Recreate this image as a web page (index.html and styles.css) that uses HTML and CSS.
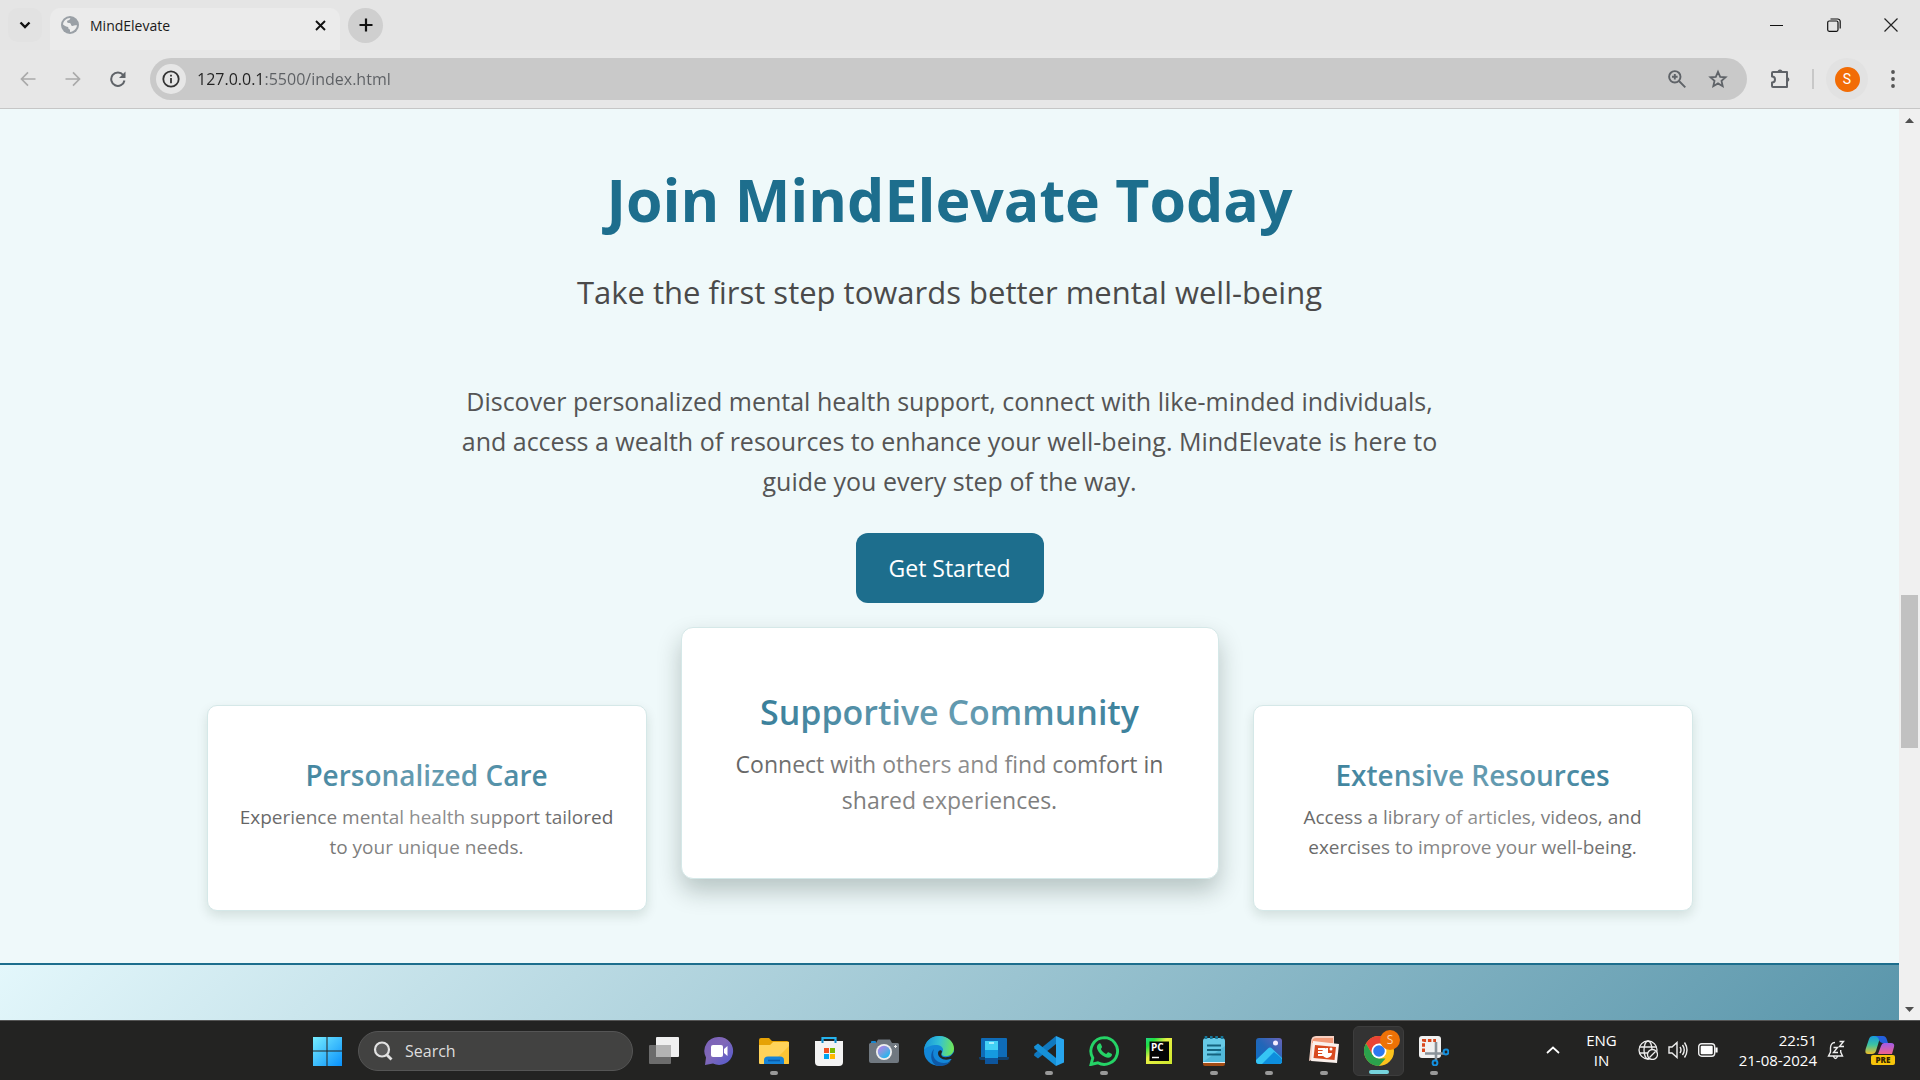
FILE: index.html
```html
<!DOCTYPE html>
<html lang="en">
<head>
<meta charset="utf-8">
<title>MindElevate</title>
<link rel="stylesheet" href="styles.css">
</head>
<body>
<header class="browser">
  <div class="tabstrip">
    <button class="tab-search" aria-label="Search tabs"><svg width="12" height="8" viewBox="0 0 12 8"><path d="M1.5 1.5 6 6l4.500-4.500" fill="none" stroke="#111" stroke-width="2.400"/></svg></button>
    <div class="tab">
      <svg width="18" height="18" viewBox="0 0 18 18"><circle cx="9" cy="9" r="9" fill="#9aa0a6"/><path d="M9.500 2C8.500 3 9 4 7.500 4.300 6 4.500 6 5.500 6.200 6.300c.4 1 2.300.4 3.300 1.200.9.800.2 2.200 1.600 2.400 1.500.2 2.300-.8 4.900-.6-.4 3.300-3.200 6.400-7 6.700v-2.500c-1.400-.2-1.800-1-1.700-2.200C6.200 10.500 4.500 10.700 2 8.500 2.200 5 5.500 1.800 9.500 2z" fill="#eee"/></svg>
      <span class="tab-title">MindElevate</span>
      <button class="icon-btn" aria-label="Close tab"><svg width="11" height="11" viewBox="0 0 11 11"><path d="M1 1l9 9M10 1l-9 9" stroke="#111" stroke-width="1.900"/></svg></button>
    </div>
    <button class="new-tab" aria-label="New tab"><svg width="14" height="14" viewBox="0 0 14 14"><path d="M7 .5v13M.5 7h13" stroke="#111" stroke-width="2.200"/></svg></button>
    <div class="window-controls">
      <button aria-label="Minimize"><svg width="14" height="14" viewBox="0 0 14 14"><path d="M0 7.500h13" stroke="#111"/></svg></button>
      <button aria-label="Restore"><svg width="14" height="14" viewBox="0 0 14 14" fill="none" stroke="#111" stroke-width="1.200"><rect x=".7" y="3" width="10.300" height="10.300" rx="1.500"/><path d="M3.500 1h7a2.500 2.500 0 0 1 2.700 2.500v7"/></svg></button>
      <button aria-label="Close"><svg width="14" height="14" viewBox="0 0 14 14"><path d="M.5.5l13 13M13.500.5l-13 13" stroke="#222" stroke-width="1.200"/></svg></button>
    </div>
  </div>
  <div class="toolbar">
    <nav class="nav">
      <button aria-label="Back"><svg width="16" height="16" viewBox="0 0 16 16"><path d="M15.500 8H2M8 1.300 1.500 8 8 14.700" fill="none" stroke="#aaa" stroke-width="1.700"/></svg></button>
      <button aria-label="Forward"><svg width="16" height="16" viewBox="0 0 16 16"><path d="M.5 8H14M8 1.300 14.500 8 8 14.700" fill="none" stroke="#aaa" stroke-width="1.700"/></svg></button>
      <button aria-label="Reload"><svg width="16" height="16" viewBox="0 0 16 16"><path d="M13.200 4A6.700 6.700 0 1 0 14.500 9.500" fill="none" stroke="#5f6368" stroke-width="2"/><path d="M15.500.5v6.500H9z" fill="#5f6368"/></svg></button>
    </nav>
    <div class="omnibox">
      <button class="site-info" aria-label="View site information"><svg width="18" height="18" viewBox="0 0 18 18"><circle cx="9" cy="9" r="7.700" fill="none" stroke="#333" stroke-width="1.800"/><path d="M9 8v5.200M9 4.800v1.800" stroke="#333" stroke-width="1.800"/></svg></button>
      <input class="url" type="text" aria-label="Address" value="127.0.0.1:5500/index.html">
      <button class="icon-btn" aria-label="Zoom"><svg width="18" height="18" viewBox="0 0 18 18" fill="none" stroke="#5f6368" stroke-width="1.900"><circle cx="6.800" cy="6.800" r="5.700"/><path d="M11 11l6.300 6.300M6.800 4v5.600M4 6.800h5.600"/></svg></button>
      <button class="icon-btn" aria-label="Bookmark this page"><svg width="20" height="20" viewBox="0 0 20 20"><path d="M10 2.800l2.200 5 5.400.5-4.100 3.600 1.200 5.300L10 14.400l-4.700 2.800 1.200-5.300-4.100-3.600 5.400-.5z" fill="none" stroke="#5f6368" stroke-width="1.800"/></svg></button>
    </div>
    <div class="tools">
      <button class="icon-btn" aria-label="Extensions"><svg width="22" height="22" viewBox="0 0 22 22"><path d="M3 4h14v15H3q-1 0-1-1v-3.500c4 0 4-6 0-6V5q0-1 1-1z" fill="none" stroke="#5f6368" stroke-width="2" stroke-linejoin="round"/><path d="M7.500 4a2.500 2.500 0 0 1 5 0zM17.500 9a2.600 2.600 0 0 1 0 5z" fill="#5f6368"/></svg></button>
      <span class="divider"></span>
      <button class="profile" aria-label="Profile"><span>S</span></button>
      <button class="icon-btn" aria-label="Menu"><svg width="4" height="18" viewBox="0 0 4 18" fill="#555"><circle cx="2" cy="2" r="1.900"/><circle cx="2" cy="9" r="1.900"/><circle cx="2" cy="16" r="1.900"/></svg></button>
    </div>
  </div>
</header>

<div class="viewport">
  <main class="page">
    <section class="join">
      <h1>Join MindElevate Today</h1>
      <p class="tagline">Take the first step towards better mental well-being</p>
      <p class="intro">Discover personalized mental health support, connect with like-minded individuals, and access a wealth of resources to enhance your well-being. MindElevate is here to guide you every step of the way.</p>
      <button class="cta">Get Started</button>
      <div class="cards">
        <article class="card"><h2>Personalized Care</h2><p>Experience mental health support tailored to your unique needs.</p></article>
        <article class="card card-active"><h2>Supportive Community</h2><p>Connect with others and find comfort in shared experiences.</p></article>
        <article class="card"><h2>Extensive Resources</h2><p>Access a library of articles, videos, and exercises to improve your well-being.</p></article>
      </div>
    </section>
    <footer class="footer"></footer>
  </main>
  <div class="scrollbar">
    <svg width="9" height="5" viewBox="0 0 9 5"><path d="M0 5 4.500 0 9 5z" fill="#505050"/></svg>
    <div class="track"><span class="thumb"></span></div>
    <svg width="9" height="5" viewBox="0 0 9 5"><path d="M0 0l4.500 5L9 0z" fill="#505050"/></svg>
  </div>
</div>

<div class="taskbar">
  <div class="apps">
    <button class="app" aria-label="Start"><svg viewBox="0 0 30 30"><defs><linearGradient id="win" x1="0" y1="0" x2="30" y2="30" gradientUnits="userSpaceOnUse"><stop stop-color="#7af0ff"/><stop offset="1" stop-color="#0890fb"/></linearGradient></defs><path d="M1 1h13.500v13.500H1zM15.500 1H30v13.500H15.500zM1 15.500h13.500V30H1zM15.500 15.500H30V30H15.500z" fill="url(#win)"/></svg></button>
    <label class="search"><svg width="20" height="20" viewBox="0 0 20 20" fill="none" stroke="#e2e2e2" stroke-width="2.200"><circle cx="9" cy="8.500" r="7" fill="#5a5a5a"/><path d="M13.500 13.500l5 5" stroke-width="2.800"/></svg><input type="search" placeholder="Search" aria-label="Search"></label>
    <button class="app" aria-label="Task view"><svg viewBox="0 0 30 30"><rect y="9" width="22" height="19" rx="1" fill="#6c6c6c"/><rect x="7" y="1" width="23" height="20" rx="1" fill="#f0f0f0"/><path d="M7 9h15v12H7z" fill="#b4b4b4"/></svg></button>
    <button class="app" aria-label="Chat"><svg viewBox="0 0 30 30"><defs><linearGradient id="chat" x1="0" y1="0" x2="1" y2="1"><stop stop-color="#7a60b8"/><stop offset=".45" stop-color="#8168b8"/><stop offset="1" stop-color="#5059cf"/></linearGradient></defs><path d="M15 1a14 14 0 1 1-6 26.600L1 29l1-7.500A14 14 0 0 1 15 1z" fill="url(#chat)"/><rect x="7" y="9" width="12" height="12" rx="2" fill="#fff"/><path d="M20 13l3.500-3v10L20 17z" fill="#fff"/></svg></button>
    <button class="app running" aria-label="File Explorer"><svg viewBox="0 0 30 30"><path d="M0 4q0-2 2-2h8l3 3h15q2 0 2 2v6H0z" fill="#e6a205"/><path d="M0 9h11l3-3h16v21q0 1-1 1H1q-1 0-1-1z" fill="#ffd35a"/><path d="M30 10v18H12z" fill="#fbbf25" opacity=".7"/><path d="M5 28v-4q0-3.500 4-3.500h12q4 0 4 3.500v4z" fill="#1583d8"/><path d="M9 24.500h12" stroke="#0a5cab" stroke-width="1.600"/></svg></button>
    <button class="app" aria-label="Microsoft Store"><svg viewBox="0 0 30 30"><path d="M8.500 7V2h13v5" fill="none" stroke="#25b3ee" stroke-width="2.200"/><path d="M1 5h28v21q0 4-4 4H5q-4 0-4-4z" fill="#f3f3f3"/><path d="M10 12h5v5h-5z" fill="#f25022"/><path d="M16 12h5v5h-5z" fill="#7fba00"/><path d="M10 18h5v5h-5z" fill="#00a4ef"/><path d="M16 18h5v5h-5z" fill="#ffb900"/><path d="M8.500 7V4M21.500 7V4" stroke="#118bc9" stroke-width="2"/></svg></button>
    <button class="app" aria-label="Camera"><svg viewBox="0 0 30 30"><defs><linearGradient id="lens" x1="0" y1="0" x2=".8" y2="1"><stop stop-color="#bd7af0"/><stop offset=".5" stop-color="#779fe0"/><stop offset="1" stop-color="#13baf2"/></linearGradient></defs><rect x="2" y="5" width="5" height="4" rx="1" fill="#1787d0"/><path d="M1.500 7H7l2-3.500h12L23 7h5.500Q30 7 30 8.500v16.500q0 2-2 2H2q-2 0-2-2V8.500Q0 7 1.500 7z" fill="#707880"/><circle cx="15" cy="16" r="8" fill="#eee"/><circle cx="15" cy="16" r="6.200" fill="url(#lens)"/><path d="M26.500 9v3M25 10.500h3" stroke="#eee"/></svg></button>
    <button class="app" aria-label="Microsoft Edge"><svg viewBox="0 0 30 30"><defs><linearGradient id="edge" x1="0" y1=".4" x2="1" y2=".5"><stop stop-color="#1794dc"/><stop offset=".5" stop-color="#34c1d5"/><stop offset="1" stop-color="#71e755"/></linearGradient></defs><circle cx="15" cy="15" r="15" fill="#1387d8"/><path d="M0 14C1 5 7 0 15 0c9 0 15 6 15 12.500 0 5-4 7.500-8 7.500-4.500 0-5-2-3.500-4 2-3-1-7-5.500-7C7 9 2 11 0 14z" fill="url(#edge)"/><path d="M10 13c-3 8 2 14 10 14 3 0 6-1 7-2-3 4-8 5.500-13 5-7-1-9-12-4-17z" fill="#0e58a6"/><path d="M18 16c-2 3 0 6 5 5 3 0 5-2 7-5v7h-4c-6 2-12-1-12-6 0-3 4-4 4-1z" fill="#232322"/></svg></button>
    <button class="app" aria-label="Phone Link"><svg viewBox="0 0 30 30"><rect x="2" y="2" width="26" height="20" rx="1" fill="#0f6cb8"/><path d="M0 21h30v1q0 2-2 2H2q-2 0-2-2z" fill="#11406c"/><rect x="6" y="5" width="13" height="23" rx="1" fill="#159ae0"/><path d="M6 5h13v9H6z" fill="#42d1f6"/><path d="M6 22h13v6H6z" fill="#0d559d"/><path d="M10 7h5" stroke="#e5ffff" stroke-width="1.200"/></svg></button>
    <button class="app running" aria-label="Visual Studio Code"><svg viewBox="0 0 30 30"><path d="M22 0l8 3.500v23L22 30z" fill="#27a5ee"/><path d="M22 0v8L4 22.500l-4-3 .5-2z" fill="#1079c0"/><path d="M22 30v-8L4 7.500l-4 3 .5 2z" fill="#1691d8"/></svg></button>
    <button class="app running" aria-label="WhatsApp"><svg viewBox="0 0 30 30"><path d="M15.200 1.600a13.400 13.400 0 1 1-6.400 25.200L2 28.500l1.800-6.600A13.400 13.400 0 0 1 15.200 1.600z" fill="none" stroke="#25d366" stroke-width="2.900"/><path d="M9.500 8c1-1 2-.8 2.500.3l1 2.500c.3 1-1.300 1.800-1 2.500 1 2.200 2.800 3.600 5 4.600.8.200 1.600-2 2.500-1.600l3 1.500c1 .6.300 2.300-.6 3-1.500 1.300-3.500 1.300-5.800.3-3.800-1.500-6.500-4.500-7.900-8C7.500 11 8 9.300 9.500 8z" fill="#25d366"/></svg></button>
    <button class="app" aria-label="PyCharm"><svg viewBox="0 0 30 30"><defs><linearGradient id="py" x1="0" y1="0" x2="1" y2="1"><stop stop-color="#20d789"/><stop offset=".18" stop-color="#20e040"/><stop offset=".42" stop-color="#e8f044"/><stop offset="1" stop-color="#cde72d"/></linearGradient></defs><path d="M2 2h26v26H2z" fill="url(#py)"/><path d="M5.500 5.500h19.500V25H5.500z" fill="#050505"/><text x="7" y="15" class="pc">PC</text><path d="M8 21.500h7" stroke="#fff" stroke-width="1.500"/></svg></button>
    <button class="app running" aria-label="Notepad"><svg viewBox="0 0 30 30"><path d="M4 25h22v3q0 2-2 2H6q-2 0-2-2z" fill="#a34c14"/><path d="M4 24h22v3H4z" fill="#eee"/><path d="M4 5q0-3 3-3h16q3 0 3 3v21H4z" fill="#66c9e6"/><path d="M4 26L26 10v16z" fill="#42aed1" opacity=".6"/><path d="M8 9.500h14M8 14h14M8 18.500h14" stroke="#15627e" stroke-width="1.800"/><path d="M7 0v3M12.300 0v3M17.600 0v3M23 0v3" stroke="#15779a" stroke-width="2.600"/></svg></button>
    <button class="app running" aria-label="Photos"><svg viewBox="0 0 30 30"><defs><linearGradient id="pho" x1="0" y1="1" x2="1" y2="0"><stop stop-color="#0b6fc7"/><stop offset=".5" stop-color="#2266b8"/><stop offset="1" stop-color="#6863b8"/></linearGradient></defs><rect x="2" y="2" width="26" height="26" rx="3" fill="url(#pho)"/><path d="M2 24l12-11.500q2-2 4 0L28 22v3q0 3-3 3H5q-3 0-3-3z" fill="#36c5f4"/><path d="M8 28l12-12q8 6 8 8v1q0 3-3 3z" fill="#0d8edd"/><circle cx="21.500" cy="7" r="2.500" fill="#f5edff"/></svg></button>
    <button class="app running" aria-label="PowerPoint"><svg viewBox="0 0 30 30"><path d="M7 0h18v15L0 25 2 6q0-6 5-6z" fill="#f6d0c2"/><path d="M7 2h17v5H3q0-5 4-5z" fill="#f49a78"/><path d="M4 5l26 3-2 19-26-2z" fill="#faf0ec"/><path d="M6 9l21 2-1.500 13L4.500 22z" fill="#d94a1f"/><path d="M9 13h7M9 16h5M9 19h7" stroke="#fff" stroke-width="1.800"/><path d="M19 12a5 5 0 1 0 4 5h-4z" fill="#fff"/><circle cx="22" cy="13" r="1.500" fill="#fff"/></svg></button>
    <button class="app running active" aria-label="Google Chrome"><svg viewBox="0 0 30 30"><circle cx="15" cy="15" r="15" fill="#fcc31d"/><path d="M2 7.500a15 15 0 0 1 26 0H15L8.500 18.750z" fill="#ea4335"/><path d="M2 7.500l6.500 11.250L15 22.500h6.500L15 30A15 15 0 0 1 2 7.500z" fill="#2ba24c"/><circle cx="15" cy="15" r="7.500" fill="#fff"/><circle cx="15" cy="15" r="5.800" fill="#2b78ef"/></svg><span class="badge">S</span></button>
    <button class="app running" aria-label="Snipping Tool"><svg viewBox="0 0 30 30"><rect width="22" height="22" rx="3" fill="#f1f1f1"/><path d="M4.500 16V4.500H17" fill="none" stroke="#d9471d" stroke-width="3" stroke-dasharray="3.500 1.800"/><path d="M17 6v18M6 17.500h19" stroke="#8a9299" stroke-width="2.600"/><g fill="none" stroke="#1490df" stroke-width="2"><circle cx="16" cy="27" r="2.400"/><circle cx="27" cy="16" r="2.400"/></g></svg></button>
  </div>
  <div class="tray">
    <button aria-label="Show hidden icons"><svg width="14" height="8" viewBox="0 0 14 8"><path d="M1 7l6-5.500L13 7" fill="none" stroke="#fff" stroke-width="1.700"/></svg></button>
    <button class="lang">ENG<br>IN</button>
    <button class="status" aria-label="Network, volume and battery">
      <svg width="20" height="20" viewBox="0 0 20 20" fill="none" stroke="#eee" stroke-width="1.300"><circle cx="10" cy="10" r="9"/><ellipse cx="10" cy="10" rx="4" ry="9"/><path d="M1.500 7h17M1.500 13h17"/><circle cx="14.500" cy="14.500" r="5" fill="#232322"/><path d="M11.500 17.500l6-6"/></svg>
      <svg width="20" height="18" viewBox="0 0 20 18" fill="none" stroke="#eee" stroke-width="1.400"><path d="M1 6h3l5-4.500v15L4 12H1zM12 6q2 3 0 6M14.500 4q3.500 5 0 10M16.500 1.500q5 7.500 0 15"/></svg>
      <svg width="20" height="14" viewBox="0 0 20 14"><rect x=".7" y=".7" width="16" height="12.500" rx="3" fill="none" stroke="#eee" stroke-width="1.400"/><rect x="2.700" y="2.700" width="12" height="8.500" rx="1" fill="#fff"/><path d="M18.500 4.500v5" stroke="#fff" stroke-width="2.200"/></svg>
    </button>
    <button class="clock">22:51<br>21-08-2024</button>
    <button aria-label="Notifications"><svg width="18" height="20" viewBox="0 0 18 20" fill="none" stroke="#eee" stroke-width="1.400"><path d="M8 2.500C5 2.500 3.500 5 3.500 8v4L1.500 16h14l-1.800-4v-2M6.500 16.500q2 4 4 0"/><path d="M6.500 7.500h4l-4 5h4.500M12.500 1.500h4l-4 5h4.500"/></svg></button>
    <button class="copilot" aria-label="Copilot"><svg width="32" height="30" viewBox="0 0 32 30"><defs><linearGradient id="co" x1="0" y1="0" x2="0" y2="1"><stop stop-color="#169bdc"/><stop offset=".5" stop-color="#3ec5a0"/><stop offset="1" stop-color="#f0bd25"/></linearGradient><linearGradient id="cp" x1="0" y1="0" x2="0" y2="1"><stop stop-color="#a05ce8"/><stop offset="1" stop-color="#f0628c"/></linearGradient></defs><path d="M9 1h10q-3 1-4 5l-3 10q-1 3-4 3H4c-3 0-3-3-2-6L5 4q1-3 4-3z" fill="url(#co)"/><path d="M10 1h9q3 0 4 4l1 3h-5q-3 0-4-3-1-4-5-4z" fill="#2460dd"/><path d="M20 8h7q4 0 3 4l-2 7H14l3-8q1-3 3-3z" fill="url(#cp)"/><rect x="7" y="20" width="24" height="10" rx="2" fill="#f7c40b"/><text x="19" y="28" text-anchor="middle" class="pre">PRE</text></svg></button>
  </div>
</div>
</body>
</html>
```
FILE: styles.css
```css
* { box-sizing: border-box; }

body {
  margin: 0;
  min-height: 100vh;
  display: flex;
  flex-direction: column;
  font-family: "Open Sans", "Noto Sans", sans-serif;
  color: #555;
}

button {
  padding: 0;
  border: 0;
  background: none;
  color: inherit;
  font: inherit;
  display: inline-flex;
  align-items: center;
  justify-content: center;
}

input {
  border: 0;
  outline: 0;
  padding: 0;
  min-width: 0;
  background: none;
  font: inherit;
}

svg { display: block; flex: none; }

/* Browser frame */
.browser { background: #e5e5e5; border-bottom: 1px solid #c6c6c6; }

.tabstrip { display: flex; align-items: center; height: 50px; }

.tab-search {
  width: 34px;
  height: 34px;
  margin: 0 8px;
  border-radius: 10px;
  background: #e2e2e2;
}

.tab {
  display: flex;
  align-items: center;
  gap: 11px;
  align-self: flex-end;
  width: 290px;
  height: 42px;
  padding: 0 14px 8px 11px;
  border-radius: 10px 10px 0 0;
  background: #ebebeb;
}

.tab-title { flex: 1; font-size: 14px; color: #1a1a1a; }

.new-tab {
  width: 35px;
  height: 35px;
  margin-left: 8px;
  border-radius: 50%;
  background: #cfcfcf;
}

.window-controls { display: flex; margin-left: auto; padding-right: 1px; }
.window-controls button { width: 57px; height: 50px; }

.toolbar {
  display: flex;
  align-items: center;
  height: 58px;
  background: #e7e7e7;
}

.nav { display: flex; gap: 29px; padding: 0 24px 0 20px; }

.omnibox {
  flex: 1;
  display: flex;
  align-items: center;
  gap: 22px;
  height: 42px;
  padding: 0 19px 0 6px;
  border-radius: 21px;
  background: #c9c9c9;
}

.site-info { width: 30px; height: 30px; border-radius: 50%; background: #e6e6e6; }

/* The host part of the address is darker than its path */
.url {
  flex: 1;
  margin-left: -11px;
  height: 30px;
  font-size: 16px;
  color: transparent;
  background: linear-gradient(90deg, #222 67px, #5c5f63 67px);
  -webkit-background-clip: text;
  background-clip: text;
}

.tools { display: flex; align-items: center; padding: 0 25px 0 23px; }
.divider { width: 2px; height: 20px; margin: 0 12px 0 20px; background: #c8c8c8; }

.profile {
  width: 42px;
  height: 42px;
  margin-right: 23px;
  border-radius: 50%;
  background: #e2e2e2;
}

.profile span {
  width: 25px;
  border-radius: 50%;
  background: #f26c05;
  color: #fff;
  font: 14px/25px Roboto, sans-serif;
}

/* Page */
.viewport { flex: 1; display: flex; }
.page { flex: 1; display: flex; flex-direction: column; background: #eff9fa; }

.join {
  display: flex;
  flex-direction: column;
  align-items: center;
  padding: 48px 48px 52px;
  text-align: center;
  border-bottom: 2px solid #1d6e8d;
}

h1, h2, p { margin: 0; }
h1 { font-size: 59px; line-height: 84px; color: #1d6e8d; }
.tagline { margin-top: 26px; font-size: 31px; line-height: 50px; color: #4a4a4a; }

.intro {
  max-width: 1000px;
  margin-top: 64px;
  font-size: 25px;
  line-height: 40px;
  color: #555;
}

.cta {
  margin-top: 32px;
  padding: 0 33px;
  height: 70px;
  border-radius: 12px;
  background: #1d6e8d;
  color: #fff;
  font-size: 23px;
}

.cards {
  display: grid;
  grid-template-columns: 440fr 538fr 440fr;
  align-items: end;
  gap: 34px;
  width: 100%;
  max-width: 1486px;
  margin-top: 24px;
}

.card {
  position: relative;
  padding: 48px 34px;
  border: 1px solid #d5e8e8;
  border-radius: 10px;
  background: #fff;
  box-shadow: 0 5px 12px rgba(0, 40, 20, .12);
}

.card:first-child { padding-inline: 30px; }

.card::after {
  content: "";
  position: absolute;
  inset: 0;
  border-radius: inherit;
  background: radial-gradient(circle, rgba(255, 255, 255, .36), rgba(255, 255, 255, 0));
}

.card h2 { font-size: 28px; font-weight: 600; line-height: 42px; color: #1d6e8d; }
.card p { margin-top: 6px; font-size: 19px; line-height: 30px; }

.card-active {
  margin-bottom: 32px;
  padding: 58px 42px 60px;
  border-radius: 12px;
  box-shadow: 0 12px 24px rgba(0, 30, 20, .24);
}

.card-active h2 { font-size: 34px; line-height: 52px; }
.card-active p { margin-top: 8px; font-size: 23px; line-height: 36px; }

.footer { flex: 1; background: linear-gradient(135deg, #e3f7fb, #5a96ab); }

.scrollbar {
  display: flex;
  flex-direction: column;
  align-items: center;
  width: 21px;
  padding: 9px 0 8px;
  background: #f0f0f0;
}

.track {
  flex: 1;
  width: 17px;
  margin: 10px 0;
  display: flex;
  flex-direction: column;
}

.track::before { content: ""; flex: 462; }
.track::after { content: ""; flex: 249; }
.thumb { flex: 153; background: #c1c1c1; }

/* Taskbar */
.taskbar {
  display: grid;
  grid-template-columns: 299fr auto 459fr;
  height: 60px;
  border-top: 1px solid #555;
  background: #232322;
  color: #fff;
}

.apps { grid-column: 2; display: flex; align-items: center; }

.app { position: relative; width: 55px; height: 50px; border-radius: 6px; }
.app svg { width: 30px; height: 30px; }

.search {
  display: flex;
  align-items: center;
  gap: 12px;
  width: 275px;
  height: 40px;
  margin: 0 3px 0 4px;
  padding: 0 14px;
  border: 1px solid #555;
  border-radius: 20px;
  background: #424241;
  font-size: 16px;
}

.search input { flex: 1; color: #fff; }
.search input::placeholder { color: #ddd; opacity: 1; }

.running::after {
  content: "";
  position: absolute;
  bottom: 1px;
  left: 50%;
  margin-left: -4px;
  width: 8px;
  height: 4px;
  border-radius: 2px;
  background: #999;
}

.active { background: #333; border: 1px solid #3d3d3d; width: 51px; margin: 0 2px; }
.active::after { margin-left: -10px; width: 20px; background: #76d4dd; }

.badge {
  position: absolute;
  top: 3px;
  right: 3px;
  width: 20px;
  border-radius: 50%;
  background: #ee7206;
  color: #ffd6b5;
  font-size: 12px;
  line-height: 20px;
}

.pc { font: 700 10px "Open Sans", sans-serif; fill: #fff; }
.pre { font: 800 8px "Open Sans", sans-serif; fill: #332500; }

.tray {
  display: flex;
  align-items: center;
  justify-content: flex-end;
  padding: 0 24px 2px 0;
  font-size: 15px;
  line-height: 20px;
}

.lang { margin: 0 21px 0 26px; }
.status { gap: 10px; }
.clock { margin: 0 10px 0 21px; text-align: right; }
.copilot { margin-left: 19px; }
```
